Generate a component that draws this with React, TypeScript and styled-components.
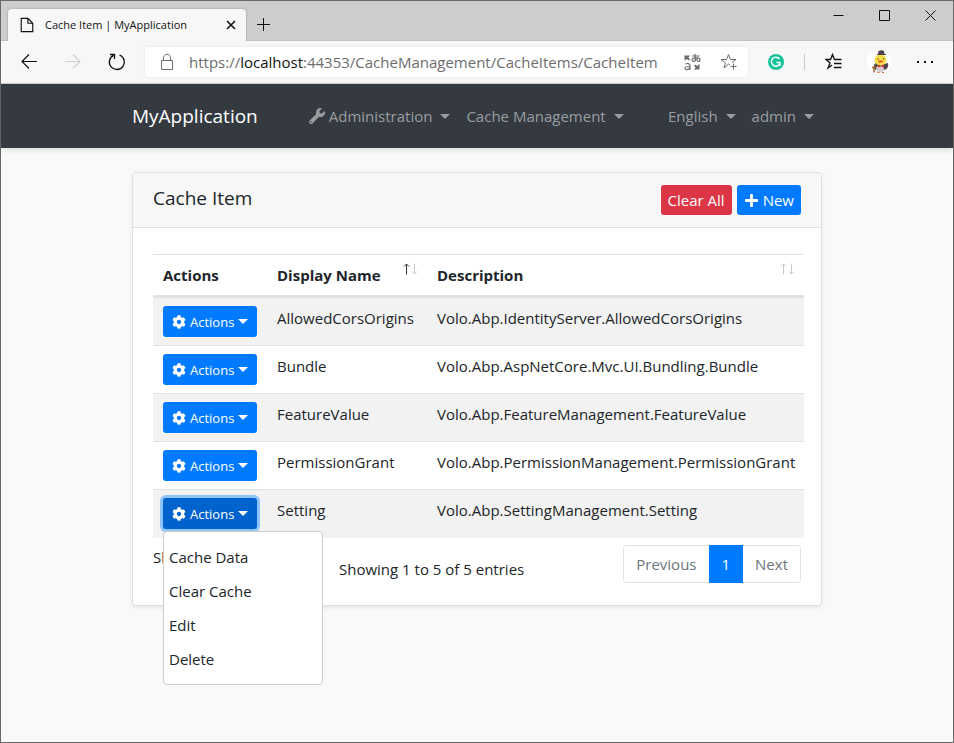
import React from 'react';
import styled, { createGlobalStyle, css } from 'styled-components';
import { FaCog, FaPlus, FaWrench } from 'react-icons/fa';

const Global = createGlobalStyle`
  *, *::before, *::after { box-sizing: border-box; }
  body { margin: 0; background: #f8f9fb; color: #212529; font: 15px/24px "Open Sans", "Noto Sans", sans-serif; }
  button, input { font: inherit; }
  button { cursor: pointer; }
`;

const Window = styled.div`
  min-height: 100vh;
  display: flex;
  flex-direction: column;
  border: 1px solid #686868;
`;

const TitleBar = styled.div`
  height: 40px;
  display: flex;
  align-items: flex-end;
  background: #cdcdcd;
  border-bottom: 1px solid #c2c2c2;
`;

const Tab = styled.div`
  width: 238px;
  height: 32px;
  margin: 0 0 -1px 7px;
  padding: 0 8px 0 11px;
  display: flex;
  align-items: center;
  gap: 10px;
  background: #f7f7f7;
  border-radius: 4px 4px 0 0;
  box-shadow: 0 0 2px rgba(0, 0, 0, 0.3);
  clip-path: inset(-3px -3px 0 -3px);
  color: #111;
  font-size: 11px;
`;

const TabTitle = styled.span`
  flex: 1;
  white-space: nowrap;
`;

const IconButton = styled.button<{ $w?: number; $h?: number }>`
  flex: none;
  width: ${(p) => p.$w ?? 24}px;
  height: ${(p) => p.$h ?? 24}px;
  padding: 0;
  display: flex;
  align-items: center;
  justify-content: center;
  background: none;
  border: 0;
  color: #111;
  &:disabled { color: #d0d0d0; }
`;

const WindowControls = styled.div`
  margin-left: auto;
  align-self: flex-start;
  display: flex;
`;

const Toolbar = styled.div`
  height: 43px;
  display: flex;
  align-items: center;
  background: #f7f7f7;
  border-bottom: 1px solid #d0d0d0;
`;

const NavButtons = styled.div`
  display: flex;
  gap: 20px;
  padding: 0 16px;
`;

const AddressBar = styled.div`
  flex: 1;
  min-width: 0;
  height: 30px;
  padding: 0 7px 0 10px;
  display: flex;
  align-items: center;
  background: #fff;
  border-radius: 4px;
  box-shadow: 0 0 3px rgba(0, 0, 0, 0.1);
  color: #6d6d6d;
  button { color: #6d6d6d; }
`;

const Url = styled.a`
  flex: 1;
  min-width: 0;
  margin-left: 10px;
  overflow: hidden;
  white-space: nowrap;
  color: #6d6d6d;
  text-decoration: none;
  b { color: #111; font-weight: 400; }
`;

const AddressActions = styled.div`
  display: flex;
  gap: 13px;
`;

const Extensions = styled.div`
  display: flex;
  align-items: center;
  padding: 0 16px;
`;

const Separator = styled.span`
  width: 1px;
  height: 16px;
  margin: 0 17px 0 16px;
  background: #c8c8c8;
`;

const Profile = styled(IconButton)`
  margin: 0 22px 0 21px;
`;

const Navbar = styled.nav`
  height: 64px;
  background: #343a40;
  box-shadow: 0 2px 6px rgba(0, 0, 0, 0.12);
`;

const Container = styled.div`
  width: 100%;
  max-width: 690px;
  margin: 0 auto;
`;

const NavRow = styled(Container)`
  height: 100%;
  display: flex;
  align-items: center;
`;

const Brand = styled.a`
  margin-right: 51px;
  color: #fff;
  font-size: 19px;
  text-decoration: none;
`;

const Menus = styled.div<{ $end?: boolean }>`
  display: flex;
  gap: 16px;
  ${(p) => p.$end && css`margin-left: auto; padding-right: 8px;`}
`;

const Caret = styled.span`
  border-top: 5px solid currentColor;
  border-left: 5px solid transparent;
  border-right: 5px solid transparent;
`;

const NavItem = styled.button`
  padding: 0;
  display: flex;
  align-items: center;
  gap: 4px;
  background: none;
  border: 0;
  color: #9a9da0;
  white-space: nowrap;
  ${Caret} { margin-left: 4px; }
`;

const Card = styled.section`
  margin-top: 24px;
  background: #fff;
  border: 1px solid #dfdfdf;
  border-radius: 4px;
  box-shadow: 0 2px 4px rgba(0, 0, 0, 0.075);
`;

const CardHeader = styled.header`
  height: 55px;
  padding: 12px 20px;
  display: flex;
  justify-content: space-between;
  background: #f7f7f7;
  border-bottom: 1px solid #dfdfdf;
  border-radius: 3px 3px 0 0;
`;

const Title = styled.h1`
  margin: 0;
  font-size: 19px;
  line-height: 26px;
  font-weight: 500;
`;

const HeaderActions = styled.div`
  display: flex;
  gap: 5px;
`;

const Button = styled.button<{ $danger?: boolean }>`
  height: 30px;
  padding: 0 7px;
  display: flex;
  align-items: center;
  gap: 4px;
  background: ${(p) => (p.$danger ? '#dc3545' : '#007bff')};
  border: 0;
  border-radius: 3px;
  color: #fff;
  white-space: nowrap;
`;

const CardBody = styled.div`
  padding: 26px 17px 22px 20px;
`;

const Table = styled.table`
  width: 100%;
  border-collapse: collapse;
`;

const Th = styled.th<{ $w?: number }>`
  width: ${(p) => (p.$w ? p.$w + 'px' : 'auto')};
  height: 42px;
  padding: 0 10px;
  border-top: 1px solid #dee2e6;
  border-bottom: 3px solid #dee2e6;
  text-align: left;
  font-weight: 700;
`;

const HeadCell = styled.div`
  display: flex;
  justify-content: space-between;
  white-space: nowrap;
`;

const Sort = styled.span`
  display: flex;
  color: #c8c9ca;
  margin-right: -1px;
`;

const Tr = styled.tr`
  height: 48px;
  &:nth-child(odd) { background: #f2f2f2; }
  & + & td { border-top: 1px solid #dee2e6; }
`;

const Td = styled.td`
  padding: 8px 10px;
  vertical-align: top;
  white-space: nowrap;
  &:last-child { padding-right: 8px; }
`;

const Dropdown = styled.div`
  position: relative;
`;

const ActionButton = styled.button<{ $open?: boolean }>`
  width: 94px;
  height: 31px;
  padding: 0 9px;
  display: flex;
  align-items: center;
  gap: 4px;
  background: ${(p) => (p.$open ? '#0062cc' : '#007bff')};
  border: 0;
  border-radius: 3px;
  box-shadow: ${(p) => (p.$open ? '0 0 0 3px #8fc3fb' : 'none')};
  color: #fff;
  font-size: 13px;
  svg { flex: none; }
`;

const Menu = styled.div`
  position: absolute;
  z-index: 1;
  top: 100%;
  left: 0;
  width: 160px;
  margin-top: 2px;
  padding: 8px 0;
  background: #fff;
  border: 1px solid #cccccc;
  border-radius: 4px;
`;

const MenuItem = styled.button`
  width: 100%;
  height: 34px;
  padding: 0 5px;
  display: block;
  background: none;
  border: 0;
  color: #212529;
  text-align: left;
`;

const TableFooter = styled.footer`
  padding: 7px 3px 0 0;
  display: flex;
  align-items: flex-start;
`;

const PageLength = styled.span`
  width: 186px;
`;

const Info = styled.span`
  padding-top: 12px;
`;

const Pagination = styled.div`
  height: 38px;
  margin-left: auto;
  display: flex;
  border: 1px solid #dee2e6;
  border-radius: 4px;
`;

const PageButton = styled.button<{ $active?: boolean }>`
  padding: 0 12px;
  background: #fff;
  border: 0;
  border-radius: 4px;
  color: #6c757d;
  ${(p) => p.$active && css`margin: -1px 0; padding: 0 13px; background: #007bff; border-radius: 0; color: #fff;`}
`;

const Stroke = ({ d, size = 18, box = size, width = 1 }: { d: string; size?: number; box?: number; width?: number }) => (
  <svg width={size} height={size} viewBox={`0 0 ${box} ${box}`} fill="none" stroke="currentColor" strokeWidth={width} aria-hidden="true">
    <path d={d} />
  </svg>
);

const SortArrows = ({ ascending }: { ascending?: boolean }) => (
  <Sort>
    <svg width="16" height="12" viewBox="0 0 16 12" fill="none" stroke="currentColor" aria-hidden="true">
      <path d="M4.5 11.5V1M2 3.5 4.5 1 7 3.5" stroke={ascending ? '#33363a' : 'currentColor'} />
      <path d="M12.5 .5V11M10 8.5 12.5 11 15 8.5" />
    </svg>
  </Sort>
);

const TranslateIcon = () => (
  <svg width="18" height="18" viewBox="0 0 18 18" fill="none" stroke="currentColor" strokeWidth="1.2" aria-hidden="true">
    <path d="M1.500 2.500H7L5.500 4.500 7 6.500 5.500 7.500 4 6 1.500 7.500Z" fill="currentColor" stroke="none" />
    <path d="M16.500 16.500H11L12.500 14.500 11 12.500 12.500 11.500 14 13 16.500 11Z" fill="currentColor" stroke="none" />
    <path d="M9 3h7.500M12 1c0 3 0 5 .5 7M15 4.500c-1 4-6 5-6 2.500S17 4 17 6.500c0 1.500-1.500 2-3 2" />
    <path d="M2.500 11c2-1 4.500-.5 4.500 1.500v4.500M7 13.500c-3 0-5 0-5 1.800s4 2 5-.8" />
  </svg>
);

const GrammarIcon = () => (
  <svg width="16" height="16" viewBox="0 0 16 16" fill="none" aria-hidden="true">
    <circle cx="8" cy="8" r="8" fill="#15c39a" />
    <path d="M11.500 5A4.500 4.500 0 1 0 12 9.500M8.500 8.500H12V12" stroke="#fff" strokeWidth="1.400" />
  </svg>
);

const Avatar = () => (
  <svg width="24" height="24" viewBox="0 0 24 24" aria-hidden="true">
    <circle cx="12" cy="12" r="12" fill="#fff" />
    <path d="M9 13c-3 1-3 6 0 7h8c3 0 5-4 4-7l-4 1z" fill="#50464d" />
    <ellipse cx="13" cy="19" rx="4" ry="3.500" fill="#d5cdd0" />
    <ellipse cx="13.500" cy="10" rx="6" ry="5.500" fill="#f7dd4c" />
    <path d="M11 4 11.500 1q3-1.500 5.500 0L17.500 4z" fill="#4a4650" />
    <path d="M10 4.500h9" stroke="#4a4650" />
    <circle cx="11" cy="9" r=".7" fill="#4a4030" />
    <circle cx="16.500" cy="9" r=".7" fill="#4a4030" />
    <ellipse cx="13.500" cy="11.500" rx="2.500" ry="1.200" fill="#e0642c" />
    <path d="m11 14.500 3 1.500 3-1.500v3L14 16.500l-3 1z" fill="#d82f37" />
    <path d="M5 17.500h4M7 17.500v5" stroke="#a5612b" strokeWidth="1.500" />
    <path d="M10.500 22.500h2M15 22.500h2" stroke="#e0642c" />
  </svg>
);

const rows = [
  ['AllowedCorsOrigins', 'Volo.Abp.IdentityServer.AllowedCorsOrigins'],
  ['Bundle', 'Volo.Abp.AspNetCore.Mvc.UI.Bundling.Bundle'],
  ['FeatureValue', 'Volo.Abp.FeatureManagement.FeatureValue'],
  ['PermissionGrant', 'Volo.Abp.PermissionManagement.PermissionGrant'],
  ['Setting', 'Volo.Abp.SettingManagement.Setting'],
];

const menuItems = ['Cache Data', 'Clear Cache', 'Edit', 'Delete'];

export default function App() {
  const [openRow, setOpenRow] = React.useState('Setting');

  return (
    <Window>
      <Global />
      <TitleBar>
        <Tab>
          <Stroke d="M2.500 1.500H10L15.500 7V16.500H2.500ZM10 1.500V7H15.500" size={16} box={18} width={1.3} />
          <TabTitle>Cache Item | MyApplication</TabTitle>
          <IconButton $w={14} aria-label="Close tab"><Stroke size={10} width={1.6} d="M1 1 9 9M9 1 1 9" /></IconButton>
        </Tab>
        <IconButton $w={34} $h={32} aria-label="New tab"><Stroke size={14} d="M7.500 1V14M1 7.500H14" /></IconButton>
        <WindowControls>
          <IconButton $w={46} $h={28} aria-label="Minimize"><Stroke size={11} d="M.5 5.500H10.500" /></IconButton>
          <IconButton $w={46} $h={28} aria-label="Maximize"><Stroke size={11} d="M.5 .5H10.500V10.500H.5Z" /></IconButton>
          <IconButton $w={46} $h={28} aria-label="Close"><Stroke size={11} d="M.5 .5 10.500 10.500M10.500 .5 .5 10.500" /></IconButton>
        </WindowControls>
      </TitleBar>
      <Toolbar>
        <NavButtons>
          <IconButton aria-label="Back"><Stroke width={1.2} d="M17 8.500H2M9 1.500 2 8.500 9 15.500" /></IconButton>
          <IconButton disabled aria-label="Forward"><Stroke width={1.2} d="M1 8.500H16M9 1.500 16 8.500 9 15.500" /></IconButton>
          <IconButton aria-label="Reload"><Stroke width={1.3} d="M11.500 2A7.500 7.500 0 1 1 5.500 2.300M2 1.500H6.500V6" /></IconButton>
        </NavButtons>
        <AddressBar>
          <IconButton aria-label="Site information"><Stroke d="M3.500 7.500H14.500V16.500H3.500ZM5.500 7.500V5C5.500 0 12.500 0 12.500 5V7.500" /></IconButton>
          <Url href="https://localhost:44353/CacheManagement/CacheItems/CacheItem">https://<b>localhost</b>:44353/CacheManagement/CacheItems/CacheItem</Url>
          <AddressActions>
            <IconButton aria-label="Translate"><TranslateIcon /></IconButton>
            <IconButton aria-label="Add to favorites"><Stroke d="M10 12 8.500 11 4 15 5.500 10 1 6.500H6.500L8.500 1.500 10.500 6.500H16L12 9.500M13.500 10.500V16.500M10.500 13.500H16.500" /></IconButton>
          </AddressActions>
        </AddressBar>
        <Extensions>
          <IconButton aria-label="Writing assistant"><GrammarIcon /></IconButton>
          <Separator />
          <IconButton aria-label="Favorites"><Stroke width={1.3} d="M7 12 3 15 5 10 1 6.500H5.500L7.500 1.500 9.500 6.500H16.500M9 10.500H16.500M9 14.500H16.500" /></IconButton>
          <Profile aria-label="Profile"><Avatar /></Profile>
          <IconButton aria-label="Settings"><Stroke width={2} d="M1 9H3M8 9H10M15 9H17" /></IconButton>
        </Extensions>
      </Toolbar>
      <Navbar>
        <NavRow>
          <Brand href="#">MyApplication</Brand>
          <Menus>
            <NavItem><FaWrench size={16} />Administration<Caret /></NavItem>
            <NavItem>Cache Management<Caret /></NavItem>
          </Menus>
          <Menus $end>
            <NavItem>English<Caret /></NavItem>
            <NavItem>admin<Caret /></NavItem>
          </Menus>
        </NavRow>
      </Navbar>
      <Container as="main">
        <Card>
          <CardHeader>
            <Title>Cache Item</Title>
            <HeaderActions>
              <Button $danger>Clear All</Button>
              <Button><FaPlus size={15} />New</Button>
            </HeaderActions>
          </CardHeader>
          <CardBody>
            <Table>
              <thead>
                <tr>
                  <Th $w={114}>Actions</Th>
                  <Th $w={160}><HeadCell>Display Name<SortArrows ascending /></HeadCell></Th>
                  <Th><HeadCell>Description<SortArrows /></HeadCell></Th>
                </tr>
              </thead>
              <tbody>
                {rows.map(([name, description]) => (
                  <Tr key={name}>
                    <Td>
                      <Dropdown>
                        <ActionButton
                          $open={openRow === name}
                          aria-expanded={openRow === name}
                          onClick={() => setOpenRow(openRow === name ? '' : name)}
                        >
                          <FaCog size={14} />Actions<Caret />
                        </ActionButton>
                        {openRow === name && (
                          <Menu>{menuItems.map((item) => <MenuItem key={item}>{item}</MenuItem>)}</Menu>
                        )}
                      </Dropdown>
                    </Td>
                    <Td>{name}</Td>
                    <Td>{description}</Td>
                  </Tr>
                ))}
              </tbody>
            </Table>
            <TableFooter>
              <PageLength>Show</PageLength>
              <Info>Showing 1 to 5 of 5 entries</Info>
              <Pagination>
                <PageButton>Previous</PageButton>
                <PageButton $active>1</PageButton>
                <PageButton>Next</PageButton>
              </Pagination>
            </TableFooter>
          </CardBody>
        </Card>
      </Container>
    </Window>
  );
}
